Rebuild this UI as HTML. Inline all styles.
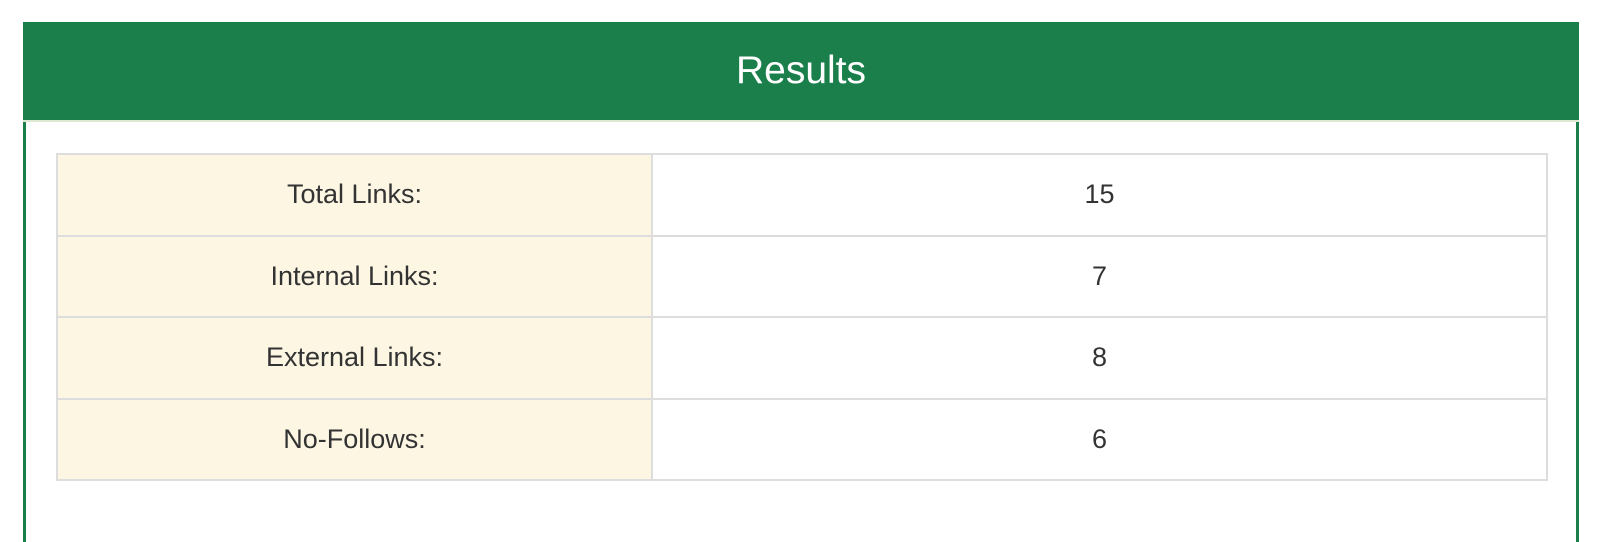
<!DOCTYPE html>
<html><head><style>
html,body{margin:0;padding:0;background:#fff;width:1600px;height:520px;overflow:hidden;font-family:"Liberation Sans",Arial,sans-serif;}
.panel{position:absolute;left:23px;top:22px;width:1550px;height:520px;border-left:3px solid #1b7f4c;border-right:3px solid #1b7f4c;box-sizing:content-box;}
.head{position:absolute;left:-3px;top:0;width:1556px;height:98px;background:#1b7f4c;border-bottom:2px solid #dfe9d2;color:#fff;font-size:39px;text-align:center;line-height:98px;}
table{position:absolute;left:30px;top:131px;width:1492px;border-collapse:collapse;}
td{border:2px solid #dddddd;height:79.5px;text-align:center;font-size:27px;color:#333;padding:0;}
td.l{background:#fcf6e3;width:593px;}
</style></head><body>
<div class="panel">
<div class="head">Results</div>
<table>
<tr><td class="l">Total Links:</td><td>15</td></tr>
<tr><td class="l">Internal Links:</td><td>7</td></tr>
<tr><td class="l">External Links:</td><td>8</td></tr>
<tr><td class="l">No-Follows:</td><td>6</td></tr>
</table>
</div>
</body></html>
